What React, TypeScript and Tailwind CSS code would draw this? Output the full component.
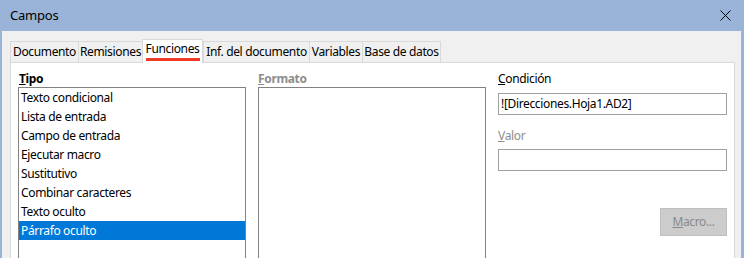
import React from "react";

const tabs = [
  { label: "Documento", w: "w-[68px]" },
  { label: "Remisiones", w: "w-[64px]" },
  { label: "Funciones", w: "w-[61px]", active: true },
  { label: "Inf. del documento", w: "w-[106px]" },
  { label: "Variables", w: "w-[53px]" },
  { label: "Base de datos", w: "w-[79px]" },
];

const tipos = [
  "Texto condicional",
  "Lista de entrada",
  "Campo de entrada",
  "Ejecutar macro",
  "Sustitutivo",
  "Combinar caracteres",
  "Texto oculto",
  "Párrafo oculto",
];

export default function App() {
  return (
    <div className="w-[744px] h-[258px] overflow-hidden bg-[#99b4d8] flex flex-col font-['Noto_Sans',sans-serif] text-[12px] tracking-[-0.35px] text-black">
      <div className="h-[31px] flex items-center justify-between pl-[10px] pr-[13px] shrink-0">
        <span className="text-[13px] tracking-[-0.2px]">Campos</span>
        <svg width="11" height="11" viewBox="0 0 11 11">
          <path d="M0.5 0.5 L10.5 10.5 M10.5 0.5 L0.5 10.5" stroke="#000" strokeWidth="1" />
        </svg>
      </div>
      <div className="flex-1 ml-[2px] mr-[3px] bg-[#f0f0f0] pl-[8px] pr-[6px] pt-[8px] flex flex-col min-h-0">
        <div className="flex items-end h-[23px] shrink-0 relative z-10">
          {tabs.map((t, i) =>
            t.active ? (
              <div
                key={t.label}
                className={`${t.w} h-[24px] -mb-px bg-white border-x border-t border-[#d9d9d9] flex flex-col items-center justify-end whitespace-nowrap`}
              >
                <span className="leading-[17px]">{t.label}</span>
                <div className="h-[3px] w-[54px] bg-[#f03a24] mt-[1px] mb-[2px]" />
              </div>
            ) : (
              <div
                key={t.label}
                className={`${t.w} h-[21px] border-t border-l ${i === tabs.length - 1 ? "border-r" : ""} border-[#d9d9d9] bg-[#f0f0f0] flex items-center justify-center leading-none whitespace-nowrap`}
              >
                {t.label}
              </div>
            )
          )}
        </div>
        <div className="flex-1 bg-white border border-[#d9d9d9] border-b-0 pl-[7px] pr-[6px] pt-[7px] flex gap-[12px]">
          <div className="w-[228px] flex flex-col">
            <div className="h-[17px] leading-[17px] pl-px font-bold">
              <span className="underline">T</span>ipo
            </div>
            <div className="flex-1 border-x border-t border-[#828282] bg-white">
              {tipos.map((t, i) => (
                <div
                  key={t}
                  className={`h-[19px] leading-[19px] pl-[2px] ${i === 7 ? "bg-[#0078d7] text-white" : ""}`}
                >
                  {t}
                </div>
              ))}
            </div>
          </div>
          <div className="w-[228px] flex flex-col">
            <div className="h-[17px] leading-[17px] font-bold text-[#8d8d8d]">
              <span className="underline">F</span>ormato
            </div>
            <div className="flex-1 border-x border-t border-[#828282] bg-white" />
          </div>
          <div className="w-[229px] flex flex-col">
            <div className="h-[17px] leading-[17px]">
              <span className="underline">C</span>ondición
            </div>
            <div className="mt-[6px] h-[22px] border border-[#a0a0a0] flex items-center pl-[2px]">
              ![Direcciones.Hoja1.AD2]
            </div>
            <div className="mt-[12px] h-[17px] leading-[17px] text-[#8d8d8d]">
              <span className="underline">V</span>alor
            </div>
            <div className="mt-[5px] h-[22px] border border-[#a0a0a0]" />
            <div className="flex justify-end mt-[37px]">
              <div className="w-[67px] h-[28px] bg-[#cccccc] border border-[#bfbfbf] text-[#8a8a8a] flex items-center justify-center">
                <span>
                  <span className="underline">M</span>acro...
                </span>
              </div>
            </div>
          </div>
        </div>
      </div>
    </div>
  );
}
